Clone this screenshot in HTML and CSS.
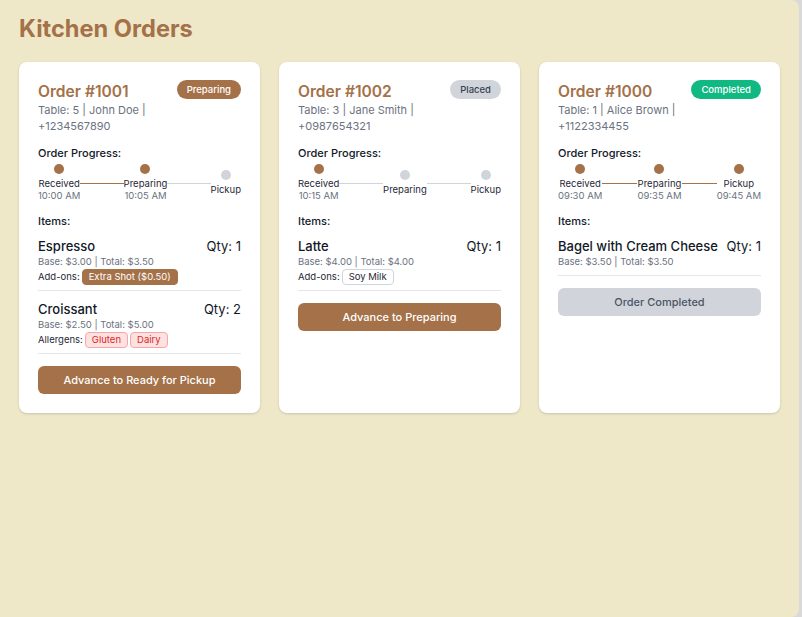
FILE: index.html
```html
<!DOCTYPE html>
<html lang="en">
<head>
<meta charset="utf-8">
<title>Kitchen Orders</title>
<link rel="stylesheet" href="styles.css">
</head>
<body>
<main class="page">
  <h1 class="page-title">Kitchen Orders</h1>
  <div class="orders">

    <section class="card">
      <header class="card-head">
        <div class="head-info">
          <h2 class="order-id">Order #1001</h2>
          <p class="meta">Table: 5 | John Doe | +1234567890</p>
        </div>
        <span class="status status-preparing">Preparing</span>
      </header>
      <h3 class="section-label progress-label">Order Progress:</h3>
      <div class="progress">
        <div class="step done"><span class="dot"></span><span class="step-name">Received</span><span class="step-time">10:00 AM</span></div>
        <span class="line done"></span>
        <div class="step done"><span class="dot"></span><span class="step-name">Preparing</span><span class="step-time">10:05 AM</span></div>
        <span class="line"></span>
        <div class="step"><span class="dot"></span><span class="step-name">Pickup</span></div>
      </div>
      <h3 class="section-label items-label">Items:</h3>
      <ul class="items">
        <li class="item">
          <div class="item-row"><span class="item-name">Espresso</span><span class="qty">Qty: 1</span></div>
          <p class="price">Base: $3.00 | Total: $3.50</p>
          <div class="extras"><span class="extras-label">Add-ons:</span><span class="tag tag-addon">Extra Shot ($0.50)</span></div>
        </li>
        <li class="item">
          <div class="item-row"><span class="item-name">Croissant</span><span class="qty">Qty: 2</span></div>
          <p class="price">Base: $2.50 | Total: $5.00</p>
          <div class="extras"><span class="extras-label">Allergens:</span><span class="tag tag-allergen">Gluten</span><span class="tag tag-allergen">Dairy</span></div>
        </li>
      </ul>
      <button class="action">Advance to Ready for Pickup</button>
    </section>

    <section class="card">
      <header class="card-head">
        <div class="head-info">
          <h2 class="order-id">Order #1002</h2>
          <p class="meta">Table: 3 | Jane Smith | +0987654321</p>
        </div>
        <span class="status status-placed">Placed</span>
      </header>
      <h3 class="section-label progress-label">Order Progress:</h3>
      <div class="progress">
        <div class="step done"><span class="dot"></span><span class="step-name">Received</span><span class="step-time">10:15 AM</span></div>
        <span class="line"></span>
        <div class="step"><span class="dot"></span><span class="step-name">Preparing</span></div>
        <span class="line"></span>
        <div class="step"><span class="dot"></span><span class="step-name">Pickup</span></div>
      </div>
      <h3 class="section-label items-label">Items:</h3>
      <ul class="items">
        <li class="item">
          <div class="item-row"><span class="item-name">Latte</span><span class="qty">Qty: 1</span></div>
          <p class="price">Base: $4.00 | Total: $4.00</p>
          <div class="extras"><span class="extras-label">Add-ons:</span><span class="tag tag-plain">Soy Milk</span></div>
        </li>
      </ul>
      <button class="action">Advance to Preparing</button>
    </section>

    <section class="card">
      <header class="card-head">
        <div class="head-info">
          <h2 class="order-id">Order #1000</h2>
          <p class="meta">Table: 1 | Alice Brown | +1122334455</p>
        </div>
        <span class="status status-completed">Completed</span>
      </header>
      <h3 class="section-label progress-label">Order Progress:</h3>
      <div class="progress">
        <div class="step done"><span class="dot"></span><span class="step-name">Received</span><span class="step-time">09:30 AM</span></div>
        <span class="line done"></span>
        <div class="step done"><span class="dot"></span><span class="step-name">Preparing</span><span class="step-time">09:35 AM</span></div>
        <span class="line done"></span>
        <div class="step done"><span class="dot"></span><span class="step-name">Pickup</span><span class="step-time">09:45 AM</span></div>
      </div>
      <h3 class="section-label items-label">Items:</h3>
      <ul class="items">
        <li class="item">
          <div class="item-row"><span class="item-name">Bagel with Cream Cheese</span><span class="qty">Qty: 1</span></div>
          <p class="price">Base: $3.50 | Total: $3.50</p>
        </li>
      </ul>
      <button class="action action-done" disabled>Order Completed</button>
    </section>

  </div>
</main>
</body>
</html>
```
FILE: styles.css
```css
* { box-sizing: border-box; }

html, body { margin: 0; padding: 0; }

body {
  background: #d9d9d9;
  font-family: Inter, "Noto Sans", "Liberation Sans", sans-serif;
  color: #111827;
}

.page {
  width: 799px;
  min-height: 617px;
  background: #eee8c9;
  border-radius: 0 8px 8px 0;
  padding: 14px 19px 19px;
}

.page-title {
  margin: 0 0 19px;
  font-size: 23.6px;
  line-height: 29px;
  font-weight: 700;
  color: #a47148;
}

.orders {
  display: grid;
  grid-template-columns: repeat(3, 1fr);
  gap: 19px;
}

.card {
  background: #ffffff;
  border-radius: 8px;
  padding: 19px 19px 19px;
  box-shadow: 0 1px 3px rgba(0, 0, 0, 0.1), 0 1px 2px rgba(0, 0, 0, 0.06);
  display: flex;
  flex-direction: column;
}

.card-head {
  display: flex;
  justify-content: space-between;
  align-items: flex-start;
  gap: 12px;
}

.order-id {
  margin: 0;
  font-size: 15.6px;
  line-height: 21px;
  font-weight: 600;
  color: #a47148;
}

.meta {
  margin: 0;
  font-size: 11px;
  line-height: 16px;
  color: #6b7280;
}

.status {
  flex-shrink: 0;
  height: 19px;
  line-height: 19px;
  padding: 0 10px;
  border-radius: 999px;
  font-size: 9.5px;
  font-weight: 500;
  margin-top: -1px;
}

.status-preparing { background: #a47148; color: #ffffff; }
.status-placed { background: #d1d5db; color: #374151; }
.status-completed { background: #10b981; color: #ffffff; }

.section-label {
  margin: 0;
  font-size: 11px;
  line-height: 16px;
  font-weight: 500;
  color: #111827;
}

.progress-label { margin-top: 11px; }

.progress {
  display: flex;
  align-items: center;
  margin-top: 3px;
}

.step {
  display: flex;
  flex-direction: column;
  align-items: center;
}

.dot {
  width: 10px;
  height: 10px;
  border-radius: 50%;
  background: #d1d5db;
  margin-bottom: 4px;
}

.step.done .dot { background: #a47148; }

.step-name {
  font-size: 9.5px;
  line-height: 12px;
  color: #1f2937;
}

.step-time {
  font-size: 9.5px;
  line-height: 12px;
  color: #6b7280;
}

.line {
  flex: 1;
  height: 1px;
  background: #d1d5db;
}

.line.done { background: #a47148; }

.items-label { margin-top: 12px; line-height: 15px; }

.items {
  list-style: none;
  margin: 0;
  padding: 0;
}

.item {
  padding: 8px 0 7px;
  border-bottom: 1px solid #e5e7eb;
}

.item + .item { padding-top: 9px; }

.item-row {
  display: flex;
  justify-content: space-between;
  align-items: center;
  gap: 8px;
  font-size: 13px;
  line-height: 19px;
  color: #111827;
}

.item-name { font-weight: 500; }

.qty { white-space: nowrap; }

.price {
  margin: 0;
  font-size: 9.5px;
  line-height: 12px;
  color: #6b7280;
}

.extras {
  display: flex;
  align-items: center;
  gap: 2px;
  margin: 1px 0 -2px;
  font-size: 9.5px;
  line-height: 16px;
}

.extras-label { color: #1f2937; }

.tag {
  height: 16px;
  line-height: 14px;
  padding: 0 6px;
  border-radius: 4px;
  font-size: 9.5px;
  border: 1px solid transparent;
}

.tag-addon { background: #a47148; color: #ffffff; border-color: #a47148; }
.tag-plain { background: #ffffff; color: #1f2937; border-color: #d1d5db; }
.tag-allergen { background: #fee2e2; color: #dc2626; border-color: #fca5a5; }

.action {
  margin-top: 12px;
  width: 100%;
  height: 28px;
  border: none;
  border-radius: 6px;
  background: #a47148;
  color: #ffffff;
  font-family: inherit;
  font-size: 11px;
  font-weight: 500;
  cursor: pointer;
}

.action-done {
  background: #d1d5db;
  color: #4b5563;
  cursor: default;
}
```
